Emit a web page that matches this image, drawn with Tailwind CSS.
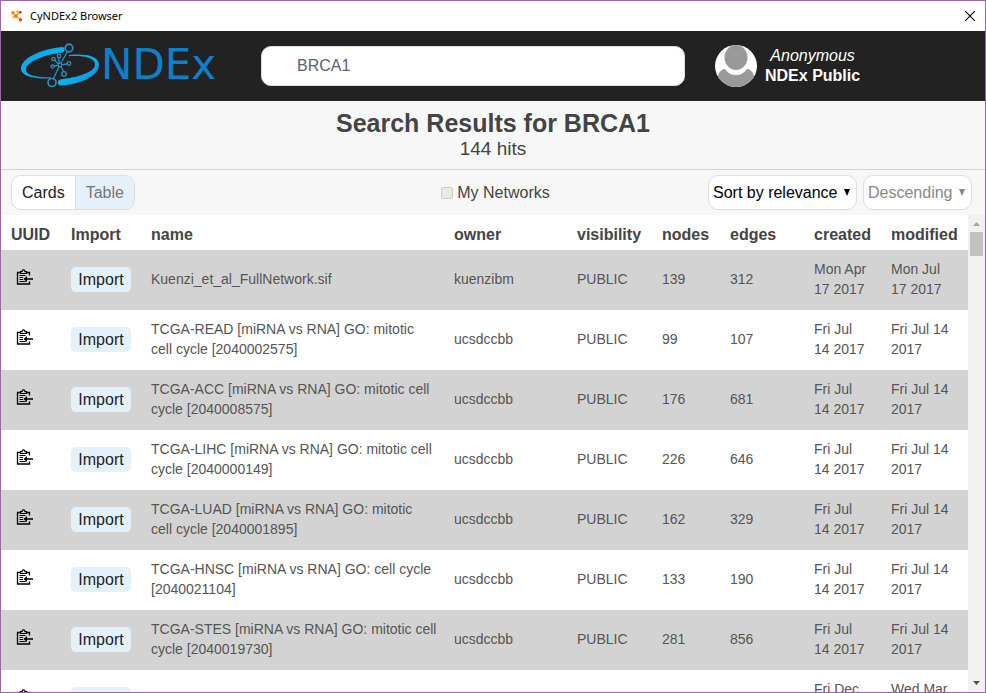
<!DOCTYPE html>
<html lang="en">
<head>
<meta charset="utf-8">
<meta name="viewport" content="width=device-width, initial-scale=1">
<title>CyNDEx2 Browser</title>
<script src="https://cdn.jsdelivr.net/npm/@tailwindcss/browser@4"></script>
</head>
<body class="flex h-screen flex-col overflow-hidden border border-[#9a68a4] bg-white font-['Liberation_Sans',Arial,sans-serif] text-base text-[#444]">

<svg class="hidden" aria-hidden="true">
  <symbol id="clipboard" viewBox="0 0 17 17">
    <path d="M13.500 6.500V3.500h-3M4.500 3.500h-3v11.500h12v-2.500" fill="none" stroke="#000" stroke-width="1.300"/>
    <path d="M4.500 4.500V2.700h1.500C6.200 1.200 6.700.8 7.500.8S8.800 1.200 9 2.700h1.500v1.800z" fill="none" stroke="#000" stroke-width="1.200"/>
    <path d="M3.500 6.500h6M3.500 8.500h3.500M3.500 10.500h3.500M3.500 12.500h6" stroke="#000"/>
    <path d="M7.500 10l3.500-3v2.200H17v1.600h-6v2.200z" fill="#000"/>
  </symbol>
</svg>

<header class="flex h-[30px] shrink-0 items-center bg-white pl-2.5 pr-2.5 text-black">
  <svg class="mr-[7px] size-3" viewBox="0 0 12 12" aria-hidden="true">
    <path d="M1 3l4 3 4-4M5 6l4 4M2 7l3-1" fill="none" stroke="#f6a02a" stroke-width="1.500"/>
    <circle cx="2" cy="2.600" r="1.700" fill="#f47b20"/><circle cx="6.500" cy="1.600" r="1.400" fill="#f9b233"/>
    <circle cx="9.300" cy="2.200" r="1.300" fill="#8a4b20"/><circle cx="5" cy="6" r="1.900" fill="#ef7d1a"/>
    <circle cx="2" cy="7.500" r="1.100" fill="#fbc15a"/><circle cx="9.500" cy="9.800" r="1.700" fill="#d8501c"/>
  </svg>
  <span class="font-['Noto_Sans',sans-serif] text-[11px]">CyNDEx2 Browser</span>
  <button type="button" aria-label="Close" class="ml-auto">
    <svg class="size-2.5" viewBox="0 0 10 10"><path d="M0 0l10 10M10 0L0 10" stroke="#000" stroke-width="1.100"/></svg>
  </button>
</header>

<nav class="flex h-[70px] shrink-0 items-center bg-[#222] pl-5">
  <svg class="h-12 w-[214px] shrink-0 overflow-visible" viewBox="0 0 214 48" role="img" aria-label="NDEx">
    <defs>
      <linearGradient id="ring" x1="0" y1="0" x2="1" y2="1"><stop offset="0" stop-color="#0aa0e8"/><stop offset=".5" stop-color="#06b4f2"/><stop offset="1" stop-color="#1280cf"/></linearGradient>
    </defs>
    <path d="M41 5C22 7 1 15 0 26c-.5 8 12 11 30 10.500v-1.300C14 35.500 4 33 5 27 6 19 25 12.500 41 10.500c3.500-.5 3.500-5.500 0-5.500z" fill="url(#ring)"/>
    <path d="M48 13c17-1.500 30 1 30 10 0 11-19 19.500-38 20.500-4 .3-4-5.500-1-6 18-2 35-7.500 35-15 0-7-11-9-26-8.300z" fill="url(#ring)"/>
    <g fill="none" stroke="#2e8fc0" stroke-width="1.300">
      <path d="M46.500 9.500L40 21M38 25l-5.500 11.500M38.500 21.500l-1-6M37.500 22l-4-4M37 23.300l-4 .7M41 22.700l5-.7M40 24.500l2.500 5"/>
      <circle cx="48" cy="6" r="3.800" stroke-width="1.700"/><circle cx="31" cy="40.500" r="4" stroke-width="1.700"/>
      <circle cx="38" cy="14" r="1.700"/><circle cx="32.500" cy="17" r="1.700"/><circle cx="31.500" cy="24.500" r="1.500"/>
      <circle cx="48" cy="21.500" r="1.800"/><circle cx="43" cy="32" r="2.300"/><circle cx="39" cy="23" r="1.800"/>
    </g>
    <text x="80" y="37" fill="#0d80cc" class="font-['DejaVu_Sans',sans-serif] text-[42px]">NDEx</text>
  </svg>
  <input type="text" value="BRCA1" aria-label="Search networks" class="ml-[26px] h-10 min-w-0 flex-1 rounded-[10px] border border-[#ddd] bg-white px-[35px] text-base text-[#606068] outline-none">
  <div class="flex w-[300px] shrink-0 items-center pl-[30px]">
    <svg class="size-[42px]" viewBox="0 0 42 42" role="img" aria-label="User avatar">
      <clipPath id="round"><circle cx="21" cy="21" r="21"/></clipPath>
      <g clip-path="url(#round)">
        <rect width="42" height="42" fill="#fff"/>
        <path d="M3 31c1-4 4-7 7-7 3 4 6 6 11 6s8-2 11-6c3 0 6 3 7 7v11H3z" fill="#999"/>
        <ellipse cx="21" cy="12.500" rx="11.500" ry="12.500" fill="#999"/>
      </g>
    </svg>
    <div class="ml-2 text-center leading-5 text-white">
      <p class="italic">Anonymous</p>
      <p class="font-bold">NDEx Public</p>
    </div>
  </div>
</nav>

<section class="h-[69px] shrink-0 border-b border-[#d3d3d3] bg-[#f7f7f7] pt-[7px] text-center">
  <h1 class="text-[25px] leading-[30px] font-bold">Search Results for BRCA1</h1>
  <p class="text-[19px] leading-[22px]">144 hits</p>
</section>

<section class="grid h-[45px] shrink-0 grid-cols-[1fr_auto_1fr] items-center bg-[#f7f7f7] pr-[13px] pl-2.5">
  <div class="flex h-[35px] w-max overflow-hidden rounded-[10px] border border-[#ddd]">
    <button type="button" class="border-r border-[#ddd] bg-white px-2.5 text-[#222]">Cards</button>
    <button type="button" class="bg-[#e4f0fa] px-2.5 text-[#777]">Table</button>
  </div>
  <label class="ml-2 flex items-center gap-1"><input type="checkbox" disabled class="size-3 appearance-none rounded-[2px] border border-[#ccc] bg-[#e9e9e9]">My Networks</label>
  <div class="flex justify-end gap-1.5">
    <div class="relative">
      <select aria-label="Sort by" class="h-[35px] appearance-none rounded-[10px] border border-[#ddd] bg-white pr-[18px] pl-1 text-black"><option>Sort by relevance</option></select>
      <svg class="pointer-events-none absolute top-3.5 right-[7px] h-[7px] w-1.5" viewBox="0 0 6 7"><path d="M0 0h6L3 7z" fill="#000"/></svg>
    </div>
    <div class="relative">
      <select aria-label="Sort direction" disabled class="h-[35px] appearance-none rounded-[10px] border border-[#ddd] bg-white pr-[18px] pl-1 text-[#888] opacity-100"><option>Descending</option></select>
      <svg class="pointer-events-none absolute top-3.5 right-[7px] h-[7px] w-1.5" viewBox="0 0 6 7"><path d="M0 0h6L3 7z" fill="#888"/></svg>
    </div>
  </div>
</section>

<main class="flex min-h-0 flex-1">
  <div class="min-w-0 flex-1 overflow-hidden">
    <table class="w-full table-fixed text-left text-sm leading-5 text-[#555]">
      <colgroup><col class="w-[60px]"><col class="w-20"><col><col class="w-[123px]"><col class="w-[85px]"><col class="w-[68px]"><col class="w-[84px]"><col class="w-[77px]"><col class="w-[87px]"></colgroup>
      <thead>
        <tr class="h-[35px] text-base text-[#444] [&>th]:pt-1 [&>th]:pl-2.5"><th>UUID</th><th>Import</th><th>name</th><th>owner</th><th>visibility</th><th>nodes</th><th>edges</th><th>created</th><th>modified</th></tr>
      </thead>
      <tbody id="rows"></tbody>
    </table>
  </div>
  <div class="flex w-[17px] shrink-0 flex-col items-center bg-[#f1f1f1]" aria-hidden="true">
    <svg class="size-[17px]" viewBox="0 0 17 17"><path d="M5 11h7L8.500 7z" fill="#a3a3a3"/></svg>
    <div class="h-6 w-[13px] bg-[#c1c1c1]"></div>
    <svg class="mt-auto size-[17px]" viewBox="0 0 17 17"><path d="M5 6h7L8.500 10z" fill="#505050"/></svg>
  </div>
</main>

<script>
const networks = [
  ["Kuenzi_et_al_FullNetwork.sif", "kuenzibm", 139, 312, "Mon Apr 17 2017", "Mon Jul 17 2017"],
  ["TCGA-READ [miRNA vs RNA] GO: mitotic<br>cell cycle [2040002575]", "ucsdccbb", 99, 107, "Fri Jul 14 2017", "Fri Jul 14 2017"],
  ["TCGA-ACC [miRNA vs RNA] GO: mitotic cell cycle [2040008575]", "ucsdccbb", 176, 681, "Fri Jul 14 2017", "Fri Jul 14 2017"],
  ["TCGA-LIHC [miRNA vs RNA] GO: mitotic cell cycle [2040000149]", "ucsdccbb", 226, 646, "Fri Jul 14 2017", "Fri Jul 14 2017"],
  ["TCGA-LUAD [miRNA vs RNA] GO: mitotic<br>cell cycle [2040001895]", "ucsdccbb", 162, 329, "Fri Jul 14 2017", "Fri Jul 14 2017"],
  ["TCGA-HNSC [miRNA vs RNA] GO: cell cycle [2040021104]", "ucsdccbb", 133, 190, "Fri Jul 14 2017", "Fri Jul 14 2017"],
  ["TCGA-STES [miRNA vs RNA] GO: mitotic cell cycle [2040019730]", "ucsdccbb", 281, 856, "Fri Jul 14 2017", "Fri Jul 14 2017"],
  ["", "", "", "", "Fri Dec", "Wed Mar"]
];
document.getElementById("rows").innerHTML = networks.map(([name, owner, nodes, edges, created, modified]) => `
  <tr class="h-[60px] odd:bg-[#d3d3d3] [&>td]:pb-0.5 [&>td]:pl-2.5">
    <td><button type="button" aria-label="Copy UUID" class="mb-1 ml-[5px] block"><svg class="size-[17px]"><use href="#clipboard"/></svg></button></td>
    <td><button type="button" class="block h-[25px] w-[60px] rounded-[5px] bg-[#e4f0fa] pt-px text-base text-[#222]">Import</button></td>
    <td class="pr-1">${name}</td><td>${owner}</td><td>${owner && "PUBLIC"}</td><td>${nodes}</td><td>${edges}</td>
    <td class="pr-2.5">${created}${owner ? "" : "<br>&nbsp;"}</td><td class="pr-2.5">${modified}${owner ? "" : "<br>&nbsp;"}</td>
  </tr>`).join("");
</script>
</body>
</html>
